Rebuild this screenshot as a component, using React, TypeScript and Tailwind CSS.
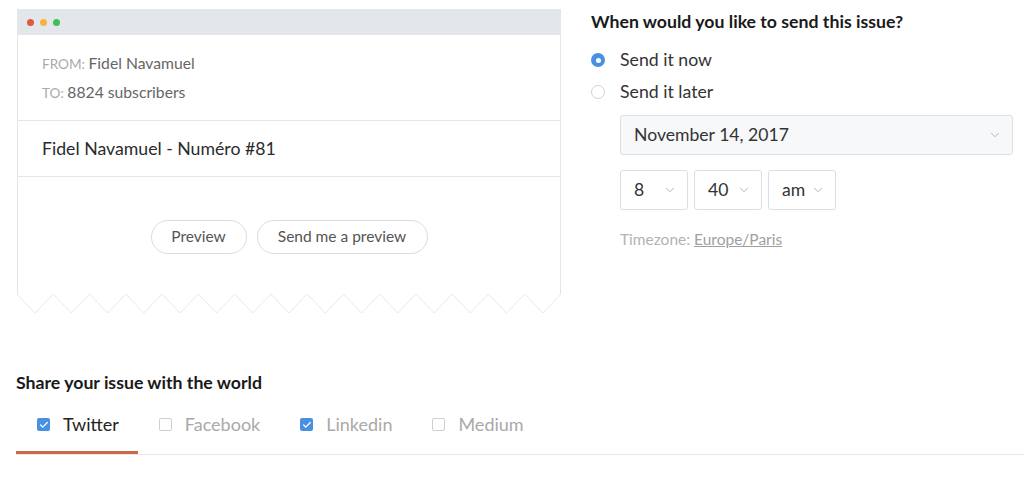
import { ChevronDown, Check } from "lucide-react"

const font = { fontFamily: "Lato, 'Open Sans', sans-serif" }

const zigzag = () => {
    const w = 544
    const teeth = 15
    const step = w / teeth
    const pts: string[] = []
    for (let i = 0; i <= teeth; i++) {
        pts.push(`${(i * step).toFixed(2)},1`)
        if (i < teeth) pts.push(`${(i * step + step / 2).toFixed(2)},20`)
    }
    return pts.join(" ")
}

const Select = ({ value, className }: { value: string; className: string }) => (
    <div
        className={`flex items-center justify-between h-10 pl-[13px] pr-[10px] border border-[#dcdfe2] rounded-[3px] text-[17.6px] text-[#333] ${className}`}
    >
        <span>{value}</span>
        <ChevronDown size={14} strokeWidth={1.5} className="text-[#aaa]" />
    </div>
)

const Tab = ({ label, checked, active }: { label: string; checked: boolean; active?: boolean }) => (
    <div
        className={`flex items-center gap-[13px] pl-[21px] pr-[19px] h-[56px] border-b-[3px] ${active ? "border-[#c8694c]" : "border-transparent"}`}
    >
        {checked ? (
            <span className="w-[13px] h-[13px] rounded-[2px] bg-[#4a90e2] flex items-center justify-center">
                <Check size={10} strokeWidth={3} className="text-white" />
            </span>
        ) : (
            <span className="w-[13px] h-[13px] rounded-[2px] border border-[#cfcfcf] bg-white" />
        )}
        <span className={`text-[18px] ${active ? "text-[#222]" : "text-[#a9a9a9]"}`}>{label}</span>
    </div>
)

export default function App() {
    return (
        <div className="w-[1024px] h-[477px] bg-white overflow-hidden" style={font}>
            <div className="flex pt-[9px] pl-[17px]">

                {/* Email preview card */}
                <div className="w-[544px] flex flex-col">
                    <div className="h-[26px] bg-[#e3e6ea] flex items-center gap-[6px] pl-[10px]">
                        <span className="w-[7px] h-[7px] rounded-full bg-[#de5a3c]" />
                        <span className="w-[7px] h-[7px] rounded-full bg-[#f3b443]" />
                        <span className="w-[7px] h-[7px] rounded-full bg-[#3fbf55]" />
                    </div>

                    <div className="border-x border-[#e6e6e6]">
                        <div className="pl-[24px] pt-[14px] pb-[13px] border-b border-[#e6e6e6]">
                            <div className="leading-[28px] text-[15.7px] text-[#666]">
                                <span className="text-[13.6px] text-[#aaa]">FROM: </span>Fidel Navamuel
                            </div>
                            <div className="leading-[28px] text-[15.7px] text-[#666]">
                                <span className="text-[13.6px] text-[#aaa]">TO: </span>8824 subscribers
                            </div>
                        </div>

                        <div className="pl-[24px] pt-[16px] pb-[15px] border-b border-[#e6e6e6] text-[17.7px] leading-[24px] text-[#2b2b2b]">
                            Fidel Navamuel - Numéro #81
                        </div>

                        <div className="flex justify-center gap-[10px] pt-[43px] pb-[40px]">
                            <button className="h-[34px] w-[96px] rounded-full border border-[#dcdcdc] text-[15.5px] text-[#555]">
                                Preview
                            </button>
                            <button className="h-[34px] w-[171px] rounded-full border border-[#dcdcdc] text-[15.5px] text-[#555]">
                                Send me a preview
                            </button>
                        </div>
                    </div>

                    <svg width="544" height="22" viewBox="0 0 544 22" className="block -mt-px">
                        <polyline
                            points={zigzag()}
                            fill="none"
                            stroke="#e9e9e9"
                            strokeWidth="1"
                        />
                    </svg>
                </div>

                {/* Schedule options */}
                <div className="ml-[30px] flex flex-col">
                    <h2 className="pt-[3px] text-[17.7px] font-bold leading-[20px] text-[#1a1a1a]">
                        When would you like to send this issue?
                    </h2>

                    <div className="mt-[14px] flex items-center gap-[15px] h-[28px]">
                        <span className="w-[14px] h-[14px] rounded-full bg-[#4a90e2] flex items-center justify-center">
                            <span className="w-[5px] h-[5px] rounded-full bg-white" />
                        </span>
                        <span className="text-[17.7px] text-[#333]">Send it now</span>
                    </div>
                    <div className="mt-[4px] flex items-center gap-[15px] h-[28px]">
                        <span className="w-[14px] h-[14px] rounded-full border border-[#d2d2d2] bg-white" />
                        <span className="text-[17.7px] text-[#333]">Send it later</span>
                    </div>

                    <div className="pl-[29px] mt-[9px] flex flex-col">
                        <Select value="November 14, 2017" className="w-[393px] bg-[#f6f8fa]" />
                        <div className="flex gap-[6px] mt-[15px]">
                            <Select value="8" className="w-[68px] bg-white" />
                            <Select value="40" className="w-[68px] bg-white" />
                            <Select value="am" className="w-[68px] bg-white" />
                        </div>
                        <div className="mt-[18px] text-[15.5px] text-[#b3b3b3]">
                            Timezone: <span className="underline text-[#a0a0a0]">Europe/Paris</span>
                        </div>
                    </div>
                </div>
            </div>

            {/* Sharing */}
            <div className="mt-[58px] pl-[16px]">
                <h2 className="text-[17.7px] font-bold leading-[20px] text-[#1a1a1a]">
                    Share your issue with the world
                </h2>
                <div className="mt-[5px] flex border-b border-[#e8e8e8]">
                    <Tab label="Twitter" checked active />
                    <Tab label="Facebook" checked={false} />
                    <Tab label="Linkedin" checked />
                    <Tab label="Medium" checked={false} />
                </div>
            </div>
        </div>
    )
}
